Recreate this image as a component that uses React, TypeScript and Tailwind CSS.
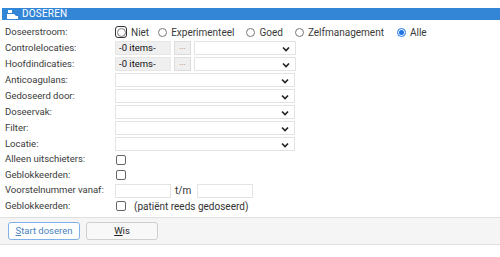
import React from 'react';

const font = { fontFamily: 'Roboto, "Liberation Sans", sans-serif' };

const Chevron = () => (
  <svg width="8" height="6" viewBox="0 0 8 6" className="absolute right-[5px] top-[4px]">
    <path d="M1 1.5 L4 4.5 L7 1.5" fill="none" stroke="#222" strokeWidth="1.6" />
  </svg>
);

const Select = ({ w = 'w-[180px]' }: { w?: string }) => (
  <div className={`relative h-[14px] ${w} border border-[#e3e3e3] bg-white`}>
    <Chevron />
  </div>
);

const Radio = ({ checked, focus }: { checked?: boolean; focus?: boolean }) => (
  <span
    className={`flex items-center justify-center ${focus ? 'w-[12px] h-[12px] rounded-[3px] border border-[#333]' : ''}`}
  >
    <span
      className={`w-[9px] h-[9px] rounded-full border flex items-center justify-center ${
        checked ? 'border-[#1a73e8]' : 'border-[#777]'
      }`}
    >
      {checked && <span className="w-[5px] h-[5px] rounded-full bg-[#1a73e8]" />}
    </span>
  </span>
);

const Checkbox = () => <span className="inline-block w-[10px] h-[10px] border border-[#666] rounded-[2px] bg-white" />;

const Label = ({ children }: { children: React.ReactNode }) => (
  <div className="w-[110px] shrink-0 whitespace-nowrap text-[#3a3a3a] text-[9.5px]">{children}</div>
);

const Row = ({ label, children, h = 'h-[16px]' }: { label: string; children?: React.ReactNode; h?: string }) => (
  <div className={`flex items-center ${h}`}>
    <Label>{label}</Label>
    <div className="flex items-center">{children}</div>
  </div>
);

const ItemsPicker = () => (
  <div className="flex items-center gap-[3px]">
    <div className="h-[14px] w-[56px] bg-[#efefef] border border-[#e6e6e6] text-[9.5px] leading-[12px] pl-[3px] text-[#111]">-0 items-</div>
    <div className="h-[14px] w-[17px] bg-[#efefef] border border-[#dcdcdc] text-[8px] leading-[9px] text-center text-[#b07050]">...</div>
    <Select w="w-[102px]" />
  </div>
);

export default function App() {
  const options: { label: string; checked?: boolean; focus?: boolean; mr: string }[] = [
    { label: 'Niet', focus: true, mr: 'mr-[9px]' },
    { label: 'Experimenteel', mr: 'mr-[12px]' },
    { label: 'Goed', mr: 'mr-[12px]' },
    { label: 'Zelfmanagement', mr: 'mr-[13px]' },
    { label: 'Alle', checked: true, mr: 'mr-0' },
  ];

  return (
    <div className="w-[500px] h-[257px] bg-white text-[10px] text-[#333] pt-[8px]" style={font}>
      <div className="ml-[2px] h-[12px] bg-[#3385d6] flex items-center pl-[5px] gap-[4px]">
        <svg width="11" height="9" viewBox="0 0 11 9">
          <path d="M1 0 H5 V3 H1 Z M0 4 H7 L9 6 H11 V9 H0 Z" fill="#fff" />
        </svg>
        <span className="text-white text-[10px] leading-none tracking-[0.2px]">DOSEREN</span>
      </div>

      <div className="pl-[5px] pt-[4px]">
        <Row label="Doseerstroom:">
          <div className="flex items-center">
            {options.map((o) => (
              <div key={o.label} className={`flex items-center gap-[4px] ${o.mr}`}>
                <Radio checked={o.checked} focus={o.focus} />
                <span className="text-[#3a3a3a]">{o.label}</span>
              </div>
            ))}
          </div>
        </Row>
        <Row label="Controlelocaties:">
          <ItemsPicker />
        </Row>
        <Row label="Hoofdindicaties:">
          <ItemsPicker />
        </Row>
        <Row label="Anticoagulans:">
          <Select />
        </Row>
        <Row label="Gedoseerd door:">
          <Select />
        </Row>
        <Row label="Doseervak:">
          <Select />
        </Row>
        <Row label="Filter:">
          <Select />
        </Row>
        <Row label="Locatie:">
          <Select />
        </Row>
        <Row label="Alleen uitschieters:" h="h-[15px]">
          <span className="ml-[1px] flex"><Checkbox /></span>
        </Row>
        <Row label="Geblokkeerden:" h="h-[16px]">
          <span className="ml-[1px] flex"><Checkbox /></span>
        </Row>
        <Row label="Voorstelnummer vanaf:" h="h-[15px]">
          <div className="h-[14px] w-[56px] border border-[#e3e3e3]" />
          <span className="ml-[4px] mr-[6px]">t/m</span>
          <div className="h-[14px] w-[56px] border border-[#e3e3e3]" />
        </Row>
        <Row label="Geblokkeerden:" h="h-[16px]">
          <span className="ml-[1px] flex items-center">
            <Checkbox />
            <span className="ml-[8px]">(patiënt reeds gedoseerd)</span>
          </span>
        </Row>
      </div>

      <div className="mt-[3px] h-[28px] bg-[#f5f5f5] border-y border-[#e0e0e0] flex items-center pl-[8px] gap-[6px]">
        <button className="h-[18px] w-[72px] bg-white border border-[#7fb0e8] rounded-[3px] text-[9.5px] text-[#4a7fc0] leading-none">
          <span className="underline">S</span>tart doseren
        </button>
        <button className="h-[18px] w-[72px] bg-[#f8f8f8] border border-[#cfcfcf] rounded-[3px] text-[9.5px] text-[#222] leading-none">
          <span className="underline">W</span>is
        </button>
      </div>
    </div>
  );
}
